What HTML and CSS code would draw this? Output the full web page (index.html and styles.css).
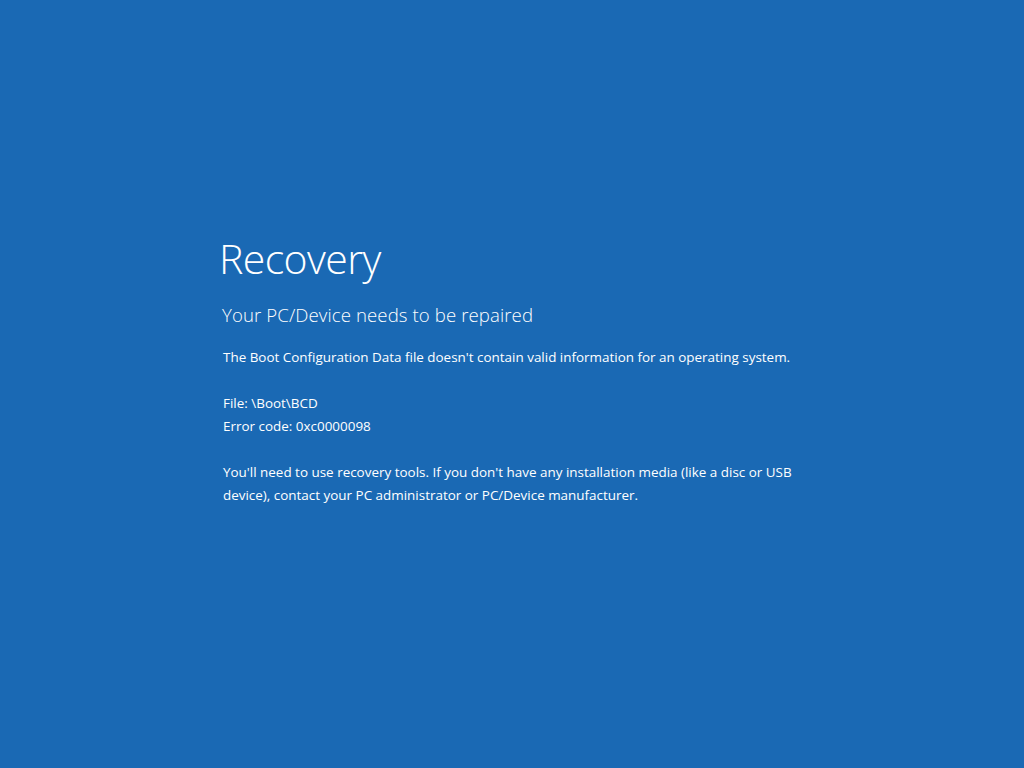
FILE: index.html
```html
<!DOCTYPE html>
<html>
<head>
<meta charset="utf-8">
<link rel="stylesheet" href="styles.css">
</head>
<body>
<main class="screen">
  <section class="content">
    <h1 class="title">Recovery</h1>
    <h2 class="subtitle">Your PC/Device needs to be repaired</h2>
    <p class="text">The Boot Configuration Data file doesn't contain valid information for an operating system.</p>
    <p class="text">File: \Boot\BCD<br>Error code: 0xc0000098</p>
    <p class="text">You'll need to use recovery tools. If you don't have any installation media (like a disc or USB<br>device), contact your PC administrator or PC/Device manufacturer.</p>
  </section>
</main>
</body>
</html>
```

FILE: styles.css
```css
html, body {
  margin: 0;
  padding: 0;
  background: #1a69b4;
}
.screen {
  width: 1024px;
  height: 768px;
  background: #1a69b4;
  color: #ffffff;
  font-family: "Open Sans", "Noto Sans", sans-serif;
  padding-left: 223px;
  padding-top: 230px;
  box-sizing: border-box;
}
.title {
  margin: 0 0 0 -4px;
  font-weight: 300;
  font-size: 41px;
  letter-spacing: -0.6px;
  line-height: 56px;
}
.subtitle {
  margin: 16px 0 0 -1px;
  font-weight: 350;
  font-size: 18.6px;
  line-height: 26px;
  letter-spacing: 0.1px;
}
.text {
  margin: 18px 0 0 0;
  font-size: 13.45px;
  line-height: 23px;
  font-weight: 400;
}
.text + .text {
  margin-top: 23px;
}
```
